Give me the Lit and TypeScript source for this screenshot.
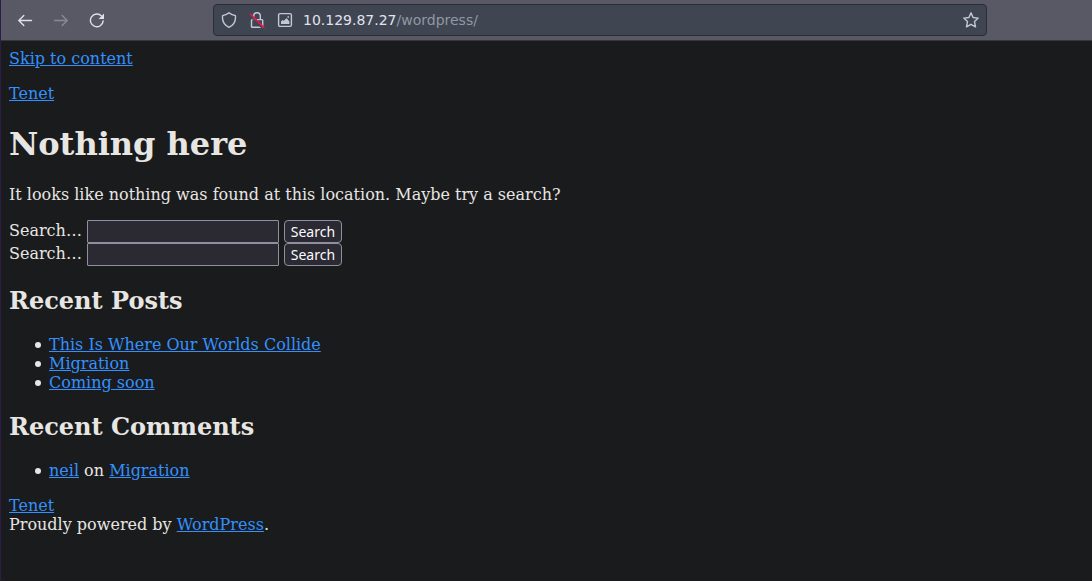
import { LitElement, html, css } from "lit";
import { customElement } from "lit/decorators.js";

@customElement("browser-bar")
class BrowserBar extends LitElement {
  static styles = css`
    :host {
      display: flex;
      align-items: center;
      box-sizing: border-box;
      height: 41px;
      padding: 0 5px 0 8px;
      background: #585965;
      border-bottom: 1px solid #35363f;
    }
    .nav {
      display: flex;
      gap: 4px;
    }
    button {
      display: flex;
      align-items: center;
      justify-content: center;
      margin: 0;
      padding: 8px;
      border: 0;
      background: none;
      color: #dde0ee;
    }
    button:disabled {
      color: #898a97;
    }
    svg {
      display: block;
      width: 16px;
      height: 16px;
      fill: none;
      stroke: currentColor;
      stroke-width: 1.4;
      stroke-linecap: round;
      stroke-linejoin: round;
    }
    .spacer {
      flex: 1 1 100px;
    }
    .url {
      display: flex;
      align-items: center;
      box-sizing: border-box;
      flex: 0 1 774px;
      min-width: 0;
      height: 32px;
      padding: 0 1px;
      border: 1px solid #2c2d38;
      border-radius: 4px;
      background: #404552;
    }
    .url button {
      padding: 6px;
      color: #c4c8d5;
    }
    .address {
      flex: 1;
      min-width: 0;
      margin-left: 4px;
      font: 14px/18px "DejaVu Sans", sans-serif;
      color: #9297a3;
      white-space: nowrap;
      overflow: hidden;
    }
    .host {
      color: #e0e3ee;
    }
    .slash-gap {
      stroke: #404552;
      stroke-width: 1.6;
    }
    .slash {
      stroke: #e8174b;
      stroke-width: 1.6;
    }
    .solid {
      fill: currentColor;
      stroke: none;
    }
  `;

  render() {
    return html`
      <div class="nav">
        <button aria-label="Back">
          <svg viewBox="0 0 16 16"><path d="M14.5 8.5H2M6.8 3.5L1.8 8.5L6.8 13.5" /></svg>
        </button>
        <button aria-label="Forward" disabled>
          <svg viewBox="0 0 16 16"><path d="M1.5 8.5H14M9.2 3.5L14.2 8.5L9.2 13.5" /></svg>
        </button>
        <button aria-label="Reload">
          <svg viewBox="0 0 16 16">
            <path d="M12.6 4.1A6.4 6.4 0 1 0 14.2 8.9" />
            <path class="solid" d="M15 1.6V7H9.6Z" />
          </svg>
        </button>
      </div>
      <div class="spacer"></div>
      <div class="url">
        <button aria-label="Tracking protection">
          <svg viewBox="0 0 16 16">
            <path d="M8 .8C9.8 2.4 12 3 14.4 3.6C15 8.5 12.8 13 8 15.3C3.2 13 1 8.5 1.6 3.6C4 3 6.2 2.4 8 .8Z" />
          </svg>
        </button>
        <button aria-label="Connection is not secure">
          <svg viewBox="0 0 16 16">
            <path d="M4.7 7.5V4A3.3 3.3 0 0 1 11.3 4V7.5M3 7.6H13Q13.7 7.6 13.7 8.4V14.4Q13.7 15.2 13 15.2H3.2Q2.5 15.2 2.5 14.4V8.4Q2.5 7.6 3 7.6Z" />
            <path class="slash-gap" d="M.6 3.4L14 16.8" />
            <path class="slash" d="M1.6 2.2L15 15.6" />
          </svg>
        </button>
        <button aria-label="Image permissions">
          <svg viewBox="0 0 16 16">
            <rect x="1.6" y="1.6" width="12.8" height="12.8" rx="1.3" />
            <path class="solid" d="M4 12V9.5L5.5 8L7 8.8L9 6.5H10L12.4 9.5V12ZM10.5 4.3H12V5.8H10.5Z" />
          </svg>
        </button>
        <div class="address"><span class="host">10.129.87.27</span>/wordpress/</div>
        <button aria-label="Bookmark this page">
          <svg viewBox="0 0 16 16">
            <path d="M8 .9L10.1 5.5L15.2 6.1L11.5 9.6L12.5 14.8L8 12.3L3.5 14.8L4.5 9.6L.8 6.1L5.9 5.5Z" />
          </svg>
        </button>
      </div>
      <div class="spacer"></div>
    `;
  }
}

@customElement("search-form")
class SearchForm extends LitElement {
  static styles = css`
    :host {
      display: block;
    }
    form {
      display: flex;
      align-items: flex-start;
      gap: 5px;
      margin: 0;
    }
    label {
      display: flex;
      align-items: flex-start;
      gap: 5px;
      line-height: 21px;
    }
    input,
    button {
      box-sizing: border-box;
      height: 23px;
      margin: 0;
      border: 1px solid #8f8f9d;
      background: #2b2a33;
      color: #fbfbfe;
      font: 14px/19px "Noto Sans", sans-serif;
    }
    input {
      width: 192px;
      padding: 1px 2px;
      border-radius: 1px;
    }
    button {
      width: 58px;
      padding: 0;
      border-radius: 4px;
    }
  `;

  render() {
    return html`
      <form role="search" @submit=${(e: Event) => e.preventDefault()}>
        <label><span>Search…</span><input type="search" name="s" /></label>
        <button type="submit">Search</button>
      </form>
    `;
  }
}

@customElement("app-root")
class AppRoot extends LitElement {
  static styles = css`
    :host {
      display: flex;
      flex-direction: column;
      box-sizing: border-box;
      min-height: 100vh;
      border-left: 1px solid #2f1c4b;
      background: #1a1b1c;
      color: #e8e6e3;
      font: 16px/19px "DejaVu Serif", serif;
    }
    main {
      padding: 8px;
    }
    a {
      color: #3391ff;
      text-decoration: underline;
    }
    p,
    ul {
      margin: 16px 0;
    }
    h1 {
      margin: 22px 0;
      font-size: 32px;
      line-height: 38px;
    }
    h2 {
      margin: 20px 0;
      font-size: 24px;
      line-height: 29px;
    }
    ul {
      padding-left: 40px;
      list-style: none;
    }
    li::before {
      content: "";
      display: inline-block;
      width: 6px;
      height: 6px;
      margin: 0 8px 0 -14px;
      border-radius: 50%;
      background: currentColor;
      vertical-align: 2px;
    }
  `;

  render() {
    const posts = ["This Is Where Our Worlds Collide", "Migration", "Coming soon"];
    return html`
      <browser-bar></browser-bar>
      <main>
        <a href="#content">Skip to content</a>
        <p><a href="#home">Tenet</a></p>
        <h1 id="content">Nothing here</h1>
        <p>It looks like nothing was found at this location. Maybe try a search?</p>
        <search-form></search-form>
        <search-form></search-form>
        <h2>Recent Posts</h2>
        <ul>
          ${posts.map((post) => html`<li><a href="#post">${post}</a></li>`)}
        </ul>
        <h2>Recent Comments</h2>
        <ul>
          <li><a href="#neil">neil</a> on <a href="#post">Migration</a></li>
        </ul>
        <footer>
          <div><a href="#home">Tenet</a></div>
          <div>Proudly powered by <a href="#wordpress">WordPress</a>.</div>
        </footer>
      </main>
    `;
  }
}
